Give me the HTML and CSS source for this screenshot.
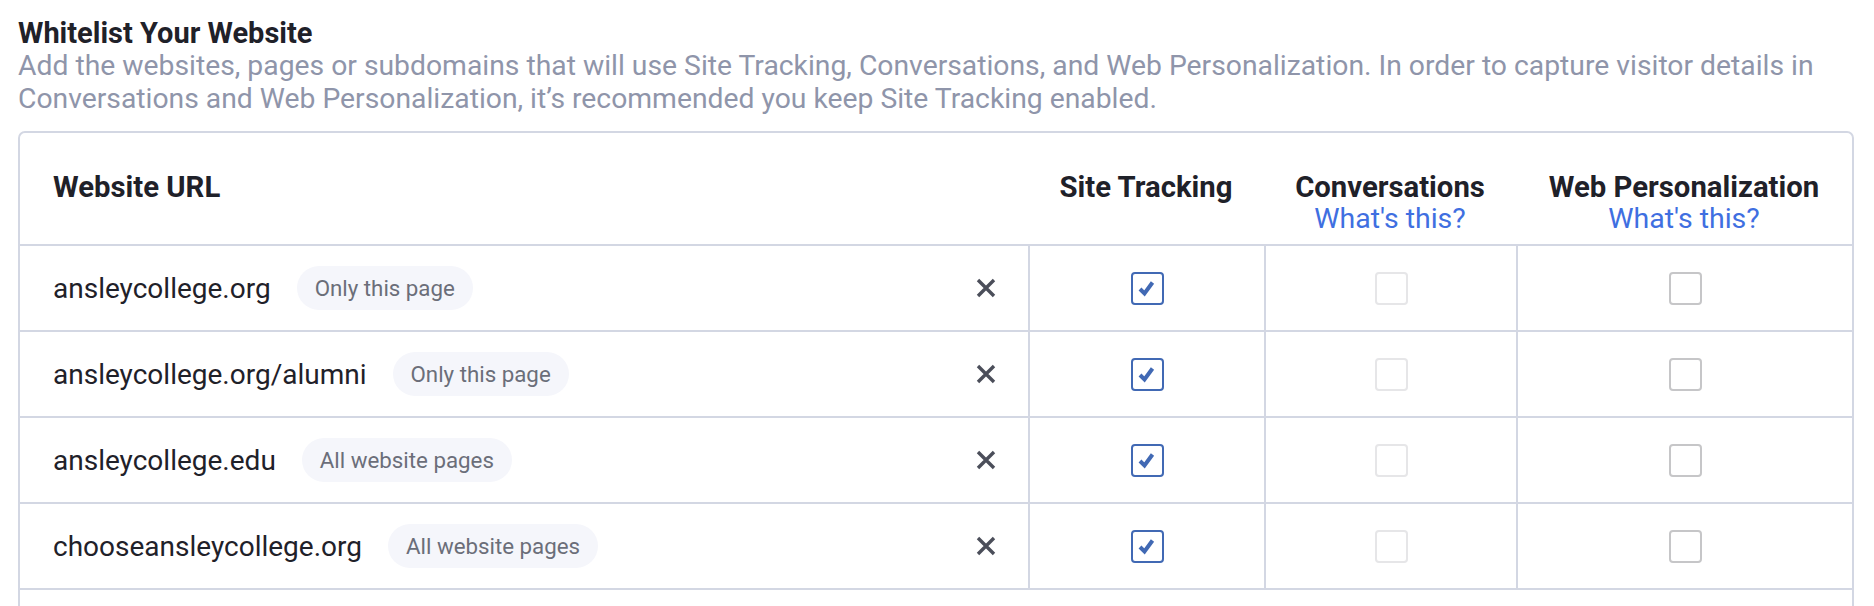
FILE: index.html
```html
<!DOCTYPE html>
<html lang="en">
<head>
<meta charset="utf-8">
<title>Whitelist Your Website</title>
<link rel="stylesheet" href="styles.css">
</head>
<body>
<div class="page">
  <h2 class="title">Whitelist Your Website</h2>
  <p class="desc">Add the websites, pages or subdomains that will use Site Tracking, Conversations, and Web Personalization. In order to capture visitor details in Conversations and Web Personalization, it’s recommended you keep Site Tracking enabled.</p>
  <div class="table">
    <div class="row head">
      <div class="cell url-head">Website URL</div>
      <div class="cell col-head">Site Tracking</div>
      <div class="cell col-head">Conversations<a class="help" href="#">What's this?</a></div>
      <div class="cell col-head">Web Personalization<a class="help" href="#">What's this?</a></div>
    </div>

    <div class="row">
      <div class="cell url"><span class="url-text">ansleycollege.org</span><span class="pill">Only this page</span><span class="remove"><svg viewBox="0 0 20 20" width="20" height="20"><path d="M2 2 L18 18 M18 2 L2 18"/></svg></span></div>
      <div class="cell box-cell div"><span class="cb checked"><svg viewBox="0 0 28 28" width="28" height="28"><path d="M7 15 L11.5 19.5 L19.5 8.5"/></svg></span></div>
      <div class="cell box-cell div"><span class="cb faint"></span></div>
      <div class="cell box-cell div"><span class="cb plain"></span></div>
    </div>

    <div class="row">
      <div class="cell url"><span class="url-text">ansleycollege.org/alumni</span><span class="pill">Only this page</span><span class="remove"><svg viewBox="0 0 20 20" width="20" height="20"><path d="M2 2 L18 18 M18 2 L2 18"/></svg></span></div>
      <div class="cell box-cell div"><span class="cb checked"><svg viewBox="0 0 28 28" width="28" height="28"><path d="M7 15 L11.5 19.5 L19.5 8.5"/></svg></span></div>
      <div class="cell box-cell div"><span class="cb faint"></span></div>
      <div class="cell box-cell div"><span class="cb plain"></span></div>
    </div>

    <div class="row">
      <div class="cell url"><span class="url-text">ansleycollege.edu</span><span class="pill">All website pages</span><span class="remove"><svg viewBox="0 0 20 20" width="20" height="20"><path d="M2 2 L18 18 M18 2 L2 18"/></svg></span></div>
      <div class="cell box-cell div"><span class="cb checked"><svg viewBox="0 0 28 28" width="28" height="28"><path d="M7 15 L11.5 19.5 L19.5 8.5"/></svg></span></div>
      <div class="cell box-cell div"><span class="cb faint"></span></div>
      <div class="cell box-cell div"><span class="cb plain"></span></div>
    </div>

    <div class="row">
      <div class="cell url"><span class="url-text">chooseansleycollege.org</span><span class="pill">All website pages</span><span class="remove"><svg viewBox="0 0 20 20" width="20" height="20"><path d="M2 2 L18 18 M18 2 L2 18"/></svg></span></div>
      <div class="cell box-cell div"><span class="cb checked"><svg viewBox="0 0 28 28" width="28" height="28"><path d="M7 15 L11.5 19.5 L19.5 8.5"/></svg></span></div>
      <div class="cell box-cell div"><span class="cb faint"></span></div>
      <div class="cell box-cell div"><span class="cb plain"></span></div>
    </div>

    <div class="add-row"></div>
  </div>
</div>
</body>
</html>
```

FILE: styles.css
```css
html, body {
  margin: 0;
  padding: 0;
  background: #ffffff;
}

body {
  font-family: Roboto, "Liberation Sans", sans-serif;
  color: #1f2129;
  overflow: hidden;
}

.page {
  padding: 18px 20px 0 18px;
}

.title {
  margin: 0;
  font-size: 29px;
  line-height: 31px;
  font-weight: 700;
  color: #1f2129;
}

.desc {
  margin: 0;
  font-size: 28.3px;
  line-height: 33px;
  color: #8f95aa;
}

.table {
  margin-top: 16px;
  border: 2px solid #d3d7e3;
  border-radius: 7px;
}

.row {
  display: grid;
  grid-template-columns: 1fr 236px 252px 336px;
  height: 84px;
  border-bottom: 2px solid #d3d7e3;
}

.row.head {
  height: 111px;
}

.cell {
  display: flex;
  align-items: center;
}

.url-head,
.col-head {
  align-items: flex-start;
  padding-top: 39px;
  font-size: 29.3px;
  line-height: 31px;
  font-weight: 700;
}

.url-head {
  padding-left: 33px;
}

.col-head {
  flex-direction: column;
  align-items: center;
  text-align: center;
}

.help {
  font-weight: 400;
  font-size: 28.5px;
  color: #3f6fe1;
  text-decoration: none;
}

.url {
  padding-left: 33px;
  padding-right: 32px;
}

.url-text {
  font-size: 28px;
  color: #1f2129;
}

.pill {
  margin-left: 26px;
  height: 44px;
  padding: 0 18px;
  border-radius: 22px;
  background: #f5f6fb;
  color: #6b6e79;
  font-size: 22.3px;
  display: flex;
  align-items: center;
}

.remove {
  margin-left: auto;
  display: flex;
}

.remove path {
  stroke: #4b4e5a;
  stroke-width: 3.4;
  fill: none;
}

.box-cell {
  justify-content: center;
}

.div {
  border-left: 2px solid #d3d7e3;
}

.cb {
  box-sizing: border-box;
  width: 33px;
  height: 33px;
  border-radius: 4px;
  border: 2px solid #c6c6c8;
  display: flex;
  align-items: center;
  justify-content: center;
}

.cb.checked {
  border-color: #4169b4;
}

.cb.checked path {
  stroke: #4169b4;
  stroke-width: 4;
  fill: none;
}

.cb.faint {
  border-color: #e6e6e8;
}

.add-row {
  height: 60px;
}
```
